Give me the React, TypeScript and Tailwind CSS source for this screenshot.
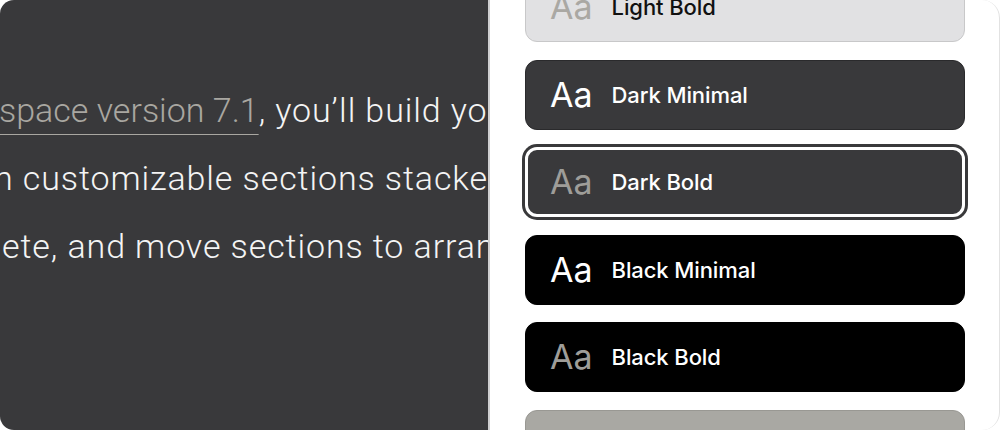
import React from 'react';

type Theme = {
  name: string;
  card: string;
  aa: string;
  label: string;
  selected?: boolean;
};

const themes: Theme[] = [
  { name: 'Light Bold', card: 'bg-[#e1e1e3] border-[1.5px] border-[#c8c8c9]', aa: 'text-[#aaa8a3]', label: 'text-[#111]' },
  { name: 'Dark Minimal', card: 'bg-[#39393b] border border-[#2a2a2c]', aa: 'text-white', label: 'text-white' },
  { name: 'Dark Bold', card: 'bg-[#39393b] border-[3px] border-white ring-[3px] ring-[#39393b]', aa: 'text-[#9e9d99]', label: 'text-white', selected: true },
  { name: 'Black Minimal', card: 'bg-black border border-black', aa: 'text-white', label: 'text-white' },
  { name: 'Black Bold', card: 'bg-black border border-black', aa: 'text-[#9e9d99]', label: 'text-white' },
  { name: 'Gray Minimal', card: 'bg-[#a9a8a3] border-[1.5px] border-[#999893]', aa: 'text-white', label: 'text-white' },
];

function ThemeCard({ theme }: { theme: Theme }) {
  return (
    <div className={`flex h-[70px] w-[440px] shrink-0 items-center gap-[19px] rounded-[12px] ${theme.card} ${theme.selected ? 'pl-[22px]' : 'pl-[24px]'}`}>
      <span className={`text-[34px] leading-none ${theme.aa}`} style={{ fontFamily: 'Inter, sans-serif' }}>
        Aa
      </span>
      <span className={`text-[22px] font-medium leading-none tracking-[-0.1px] ${theme.label}`} style={{ fontFamily: 'Inter, sans-serif' }}>
        {theme.name}
      </span>
    </div>
  );
}

// prefix hangs off the left edge, right-aligned against x=0
function Clipped({ prefix, offset, children }: { prefix: React.ReactNode; offset: string; children: React.ReactNode }) {
  return (
    <div className="flex whitespace-nowrap">
      <span className={`flex w-[400px] shrink-0 justify-end ${offset}`}>{prefix}</span>
      <span>{children}</span>
    </div>
  );
}

const link = 'text-[#a9a7a1] underline decoration-[#a9a7a1] decoration-1 underline-offset-[12px] tracking-normal';

export default function App() {
  return (
    <div className="flex h-[430px] w-[1000px] overflow-hidden bg-white">
      {/* page preview */}
      <div
        className="h-full w-[488px] shrink-0 overflow-hidden rounded-l-[14px] bg-[#39393b] pt-[76px] text-[34px] font-light leading-[68px] tracking-[0.9px] text-[#f4f4f4]"
        style={{ fontFamily: 'Roboto, sans-serif' }}
      >
        <Clipped offset="-ml-[401px]" prefix={<span className={link}>In Square</span>}>
          <span className={link}>space version 7.1</span>, you’ll build your site
        </Clipped>
        <Clipped offset="-ml-[406px]" prefix="pages i">
          n customizable sections stacked vertically.
        </Clipped>
        <Clipped offset="-ml-[398px]" prefix="You can add, edit, del">
          ete, and move sections to arrange content.
        </Clipped>
      </div>

      {/* theme picker */}
      <div className="h-full flex-1 overflow-hidden rounded-r-[18px] border-l-2 border-r border-l-[#cfcfd0] border-r-[#e2e2e2] pl-[35px]">
        <div className="-mt-[28px] flex flex-col gap-[17.5px]">
          {themes.map((t) => (
            <ThemeCard key={t.name} theme={t} />
          ))}
        </div>
      </div>
    </div>
  );
}
